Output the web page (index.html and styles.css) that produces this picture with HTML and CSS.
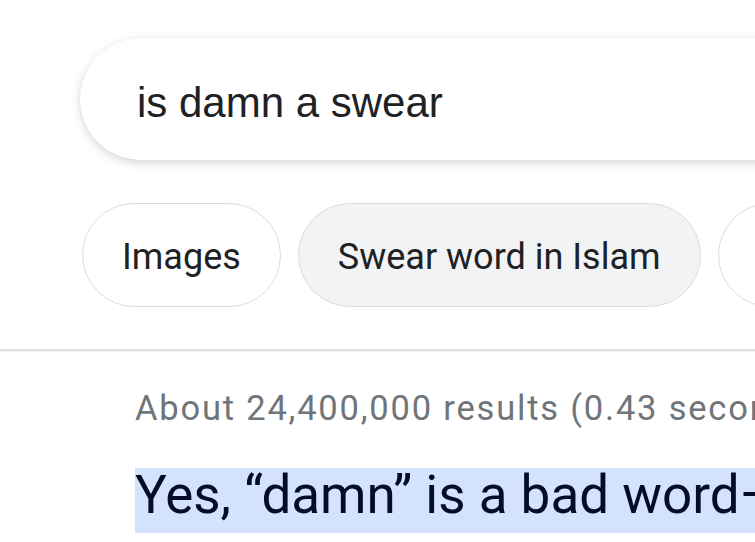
FILE: index.html
```html
<!DOCTYPE html>
<html>
<head>
<meta charset="utf-8">
<link rel="stylesheet" href="styles.css">
</head>
<body>
<div class="page">
  <div class="search-wrap">
    <div class="search">is damn a swear</div>
  </div>
  <div class="chips">
    <div class="chip">Images</div>
    <div class="chip chip-active">Swear word in Islam</div>
    <div class="chip">Meaning</div>
  </div>
  <div class="divider"></div>
  <div class="results">
    <div class="stats">About 24,400,000 results (0.43 seconds)</div>
    <div class="answer"><span class="hl">Yes, “damn” is a bad word—</span></div>
  </div>
</div>
</body>
</html>
```

FILE: styles.css
```css
html, body {
  margin: 0;
  padding: 0;
  background: #ffffff;
  overflow: hidden;
}
.page {
  width: 755px;
  height: 542px;
  overflow: hidden;
}
.search-wrap {
  padding-top: 38px;
  padding-left: 80px;
  display: flex;
}
.search {
  flex: none;
  width: 900px;
  height: 122px;
  box-sizing: border-box;
  border-radius: 61px;
  background: #fff;
  box-shadow: 0 3px 10px rgba(32, 33, 36, 0.18), 0 0 1px rgba(32,33,36,0.08);
  display: flex;
  align-items: center;
  padding-left: 57px;
  padding-top: 8px;
  font-family: "Liberation Sans", Arial, sans-serif;
  font-size: 42px;
  color: #202124;
  white-space: nowrap;
}
.chips {
  display: flex;
  gap: 17px;
  padding-left: 82px;
  margin-top: 43px;
  white-space: nowrap;
}
.chip {
  flex: none;
  height: 104px;
  box-sizing: border-box;
  border: 1.5px solid #dadce0;
  border-radius: 52px;
  padding: 0 39px;
  display: flex;
  align-items: center;
  font-family: Roboto, "Open Sans", sans-serif;
  font-size: 36px;
  color: #202124;
  background: #fff;
  padding-top: 3px;
}
.chip-active {
  background: #f1f3f4;
}
.divider {
  margin-top: 42px;
  height: 2px;
  background: #dfe1e5;
  box-shadow: 0 1px 1px rgba(0,0,0,0.04);
}
.results {
  padding-left: 135px;
  white-space: nowrap;
}
.stats {
  margin-top: 37px;
  font-family: Roboto, "Open Sans", sans-serif;
  font-size: 34.5px;
  letter-spacing: 1.8px;
  line-height: 40px;
  color: #70757a;
}
.answer {
  margin-top: 36px;
  font-family: Roboto, "Open Sans", sans-serif;
  font-size: 53px;
  color: #040c28;
}
.hl {
  background: #d3e3fd;
  display: inline-block;
  line-height: 54px;
  padding-bottom: 11px;
  padding-right: 40px;
}
```
